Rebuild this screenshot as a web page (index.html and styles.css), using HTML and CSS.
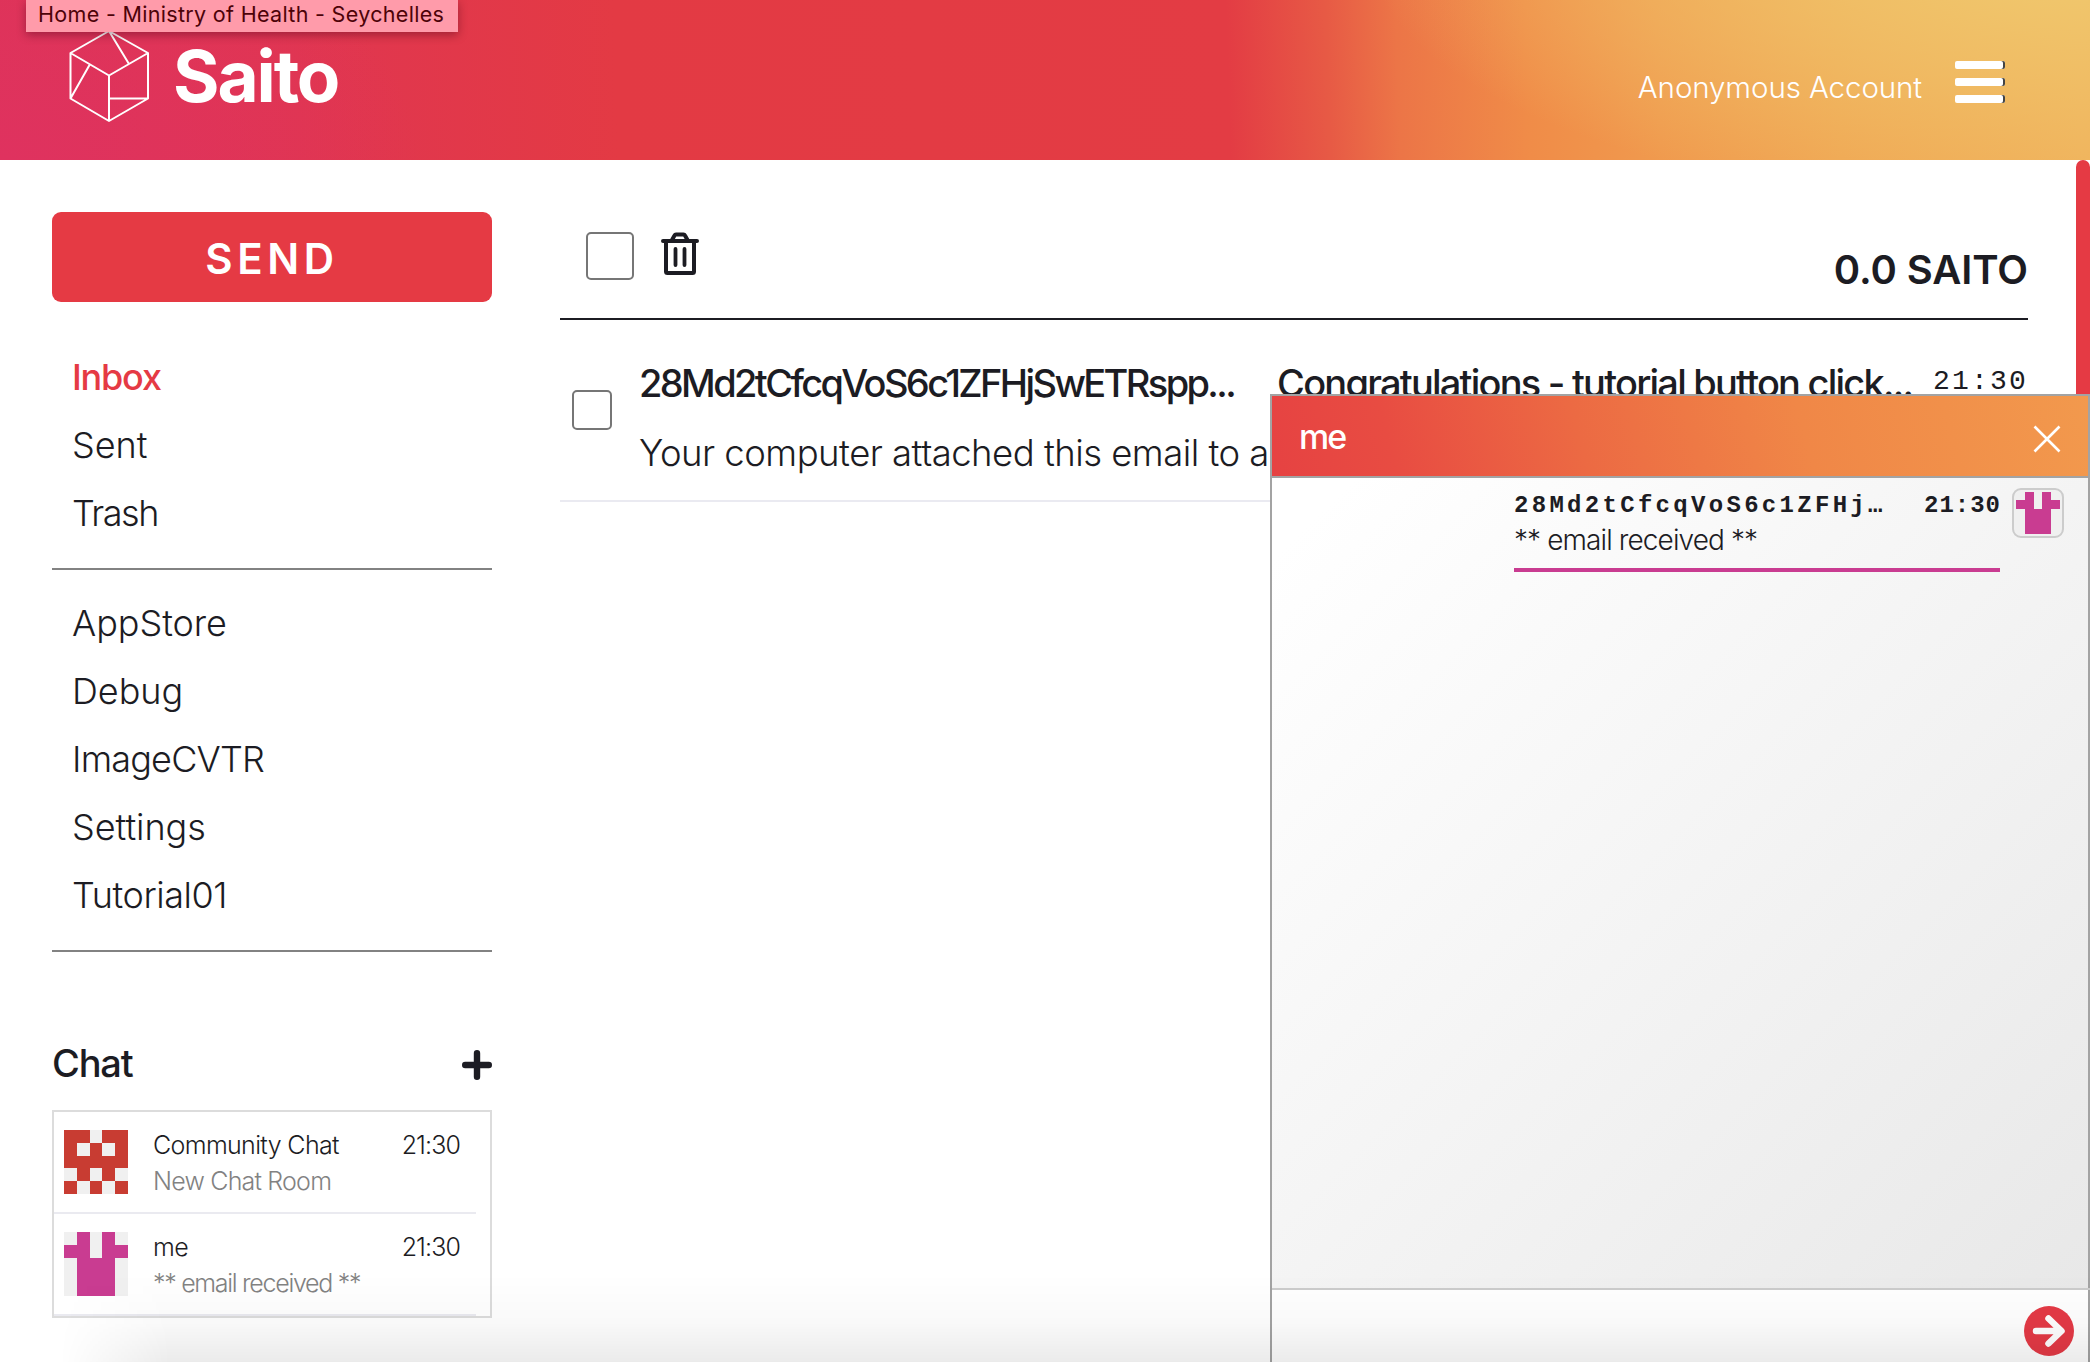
FILE: index.html
```html
<!DOCTYPE html>
<html lang="en">
<head>
<meta charset="utf-8">
<title>Saito Email</title>
<link rel="stylesheet" href="styles.css">
</head>
<body>
<header class="topbar">
  <div class="brand">
    <svg class="brand-mark" width="84" height="96" viewBox="0 0 84 96" fill="none" stroke="#fff" stroke-width="2" stroke-linejoin="round">
      <path d="M42 4 81 26V71.5L42 94 3.500 71.500V26ZM3.500 26 42 48.500 81 26M42 48.500V94M42 4 62 37M22.500 38 3.500 71.500M42 71.500H81"/>
    </svg>
    <span class="brand-name">Saito</span>
  </div>
  <div class="account">
    <span class="account-name">Anonymous Account</span>
    <span class="burger"><i></i><i></i><i></i></span>
  </div>
</header>
<div class="tooltip">Home - Ministry of Health - Seychelles</div>

<div class="page">
  <aside class="sidebar">
    <button class="send">SEND</button>
    <nav class="menu">
      <a class="active">Inbox</a>
      <a>Sent</a>
      <a class="tight">Trash</a>
    </nav>
    <nav class="menu apps">
      <a>AppStore</a>
      <a>Debug</a>
      <a class="caps">ImageCVTR</a>
      <a>Settings</a>
      <a class="digits">Tutorial01</a>
    </nav>
    <div class="chat-head">
      <h2>Chat</h2>
      <svg width="30" height="30" viewBox="0 0 30 30" stroke="#1c1c23" stroke-width="6.400" stroke-linecap="round"><path d="M15 3.200V26.800M3.200 15H26.800"/></svg>
    </div>
    <div class="rooms">
      <div class="room">
        <svg class="avatar" viewBox="0 0 5 5" shape-rendering="crispEdges"><path fill="#f0f0f0" d="M0 0H5V5H0Z"/><path fill="#c83c32" d="M0 0H2V1H3V0H5V3H4V4H5V5H4V4H3V5H2V4H1V5H0V4H1V3H0ZM1 1V2H2V1ZM3 1V2H4V1ZM2 3V4H3V3Z" fill-rule="evenodd"/></svg>
        <div class="room-text">Community Chat<small>New Chat Room</small></div>
        <time>21:30</time>
      </div>
      <div class="room">
        <svg class="avatar" viewBox="0 0 5 5" shape-rendering="crispEdges"><path fill="#f0f0f0" d="M0 0H5V5H0Z"/><path fill="#c93c91" d="M1 0H2V2H3V0H4V1H5V2H4V5H1V2H0V1H1Z"/></svg>
        <div class="room-text">me<small class="last-line">** email received **</small></div>
        <time>21:30</time>
      </div>
    </div>
  </aside>

  <main class="mail">
    <div class="toolbar">
      <span class="check big"></span>
      <svg class="trash" width="38" height="44" viewBox="0 0 38 44" fill="none" stroke="#1c1c23" stroke-width="4" stroke-linejoin="round" stroke-linecap="round"><path d="M5 10V39.500Q5 41 6.500 41H31.500Q33 41 33 39.500V10M2 9H36M11 8 13.500 3.500Q14 2.500 15 2.500H22.500Q23.500 2.500 24 3.500L26.500 8"/><path stroke-width="3.800" d="M14.500 17V33M23.500 17V33"/></svg>
      <span class="balance">0.0 SAITO</span>
    </div>
    <div class="message">
      <span class="check"></span>
      <div class="message-main">
        <div class="message-top">
          <b class="from">28Md2tCfcqVoS6c1ZFHjSwETRspp...</b>
          <b class="subject">Congratulations - tutorial button click...</b>
          <time>21:30</time>
        </div>
        <p class="excerpt">Your computer attached this email to a</p>
      </div>
    </div>
  </main>
  <div class="scrollbar"></div>
</div>

<section class="chatbox">
  <div class="chatbox-head">
    <span>me</span>
    <svg width="28" height="28" viewBox="0 0 28 28" stroke="#fff" stroke-width="2.600"><path d="M1.500 1.500 26.500 26.500M26.500 1.500 1.500 26.500"/></svg>
  </div>
  <div class="chatbox-body">
    <div class="bubble">
      <div class="bubble-top"><b>28Md2tCfcqVoS6c1ZFHj…</b><b class="when">21:30</b></div>
      <p>** email received **</p>
    </div>
    <div class="bubble-avatar">
      <svg viewBox="0 0 5 5" preserveAspectRatio="none" shape-rendering="crispEdges"><path fill="#f0f0f0" d="M0 0H5V5H0Z"/><path fill="#c93c91" d="M1 0H2V2H3V0H4V1H5V2H4V5H1V2H0V1H1Z"/></svg>
    </div>
  </div>
  <div class="chatbox-input">
    <svg width="50" height="50" viewBox="0 0 50 50"><circle cx="25" cy="25" r="25" fill="#e53a46"/><path d="M12 25H37M24.500 12.500 37.500 25 24.500 37.500" fill="none" stroke="#fff" stroke-width="6.500" stroke-linecap="round" stroke-linejoin="round"/></svg>
  </div>
</section>
<div class="bottom-shade"></div>
</body>
</html>
```
FILE: styles.css
```css
* { box-sizing: border-box; }
body {
  margin: 0;
  height: 1362px;
  overflow: hidden;
  background: #fff;
  color: #1c1c23;
  font-family: Inter, "Liberation Sans", sans-serif;
  font-weight: 300;
}
p, h2 { margin: 0; }

.topbar {
  height: 160px;
  padding: 0 85px 0 67px;
  display: flex;
  justify-content: space-between;
  background:
    radial-gradient(ellipse 420px 260px at 0 100%, #df325f, rgba(223, 50, 95, 0)),
    radial-gradient(ellipse 720px 260px at 100% -30%, #f0c66c 15%, rgba(240, 198, 108, 0)),
    linear-gradient(88deg, #de3457 0, #e03650 300px, #e33a44 620px, #e33c44 1230px, #e75a45 1330px, #ec7547 1400px, #f08c48 1530px, #f09a4e 1660px, #f0a653 1840px, #f0b05a 2080px);
}
.brand { display: flex; align-items: flex-start; padding-top: 27px; }
.brand-name { margin: 0 0 0 22px; font-size: 71px; line-height: 99px; font-weight: 700; color: #fff; letter-spacing: -2.100px; }
.account { display: flex; color: #fff; padding-top: 61px; }
.account-name { font-size: 29.500px; line-height: 52px; letter-spacing: -.1px; }
.burger { margin: 0 0 0 33px; width: 50px; display: flex; flex-direction: column; gap: 9px; }
.burger i { height: 8px; border-radius: 2px; background: #fff; box-shadow: inset -2px 0 #444; }

.tooltip {
  position: absolute; left: 26px; top: 0;
  width: 432px; height: 32px; padding-left: 12px;
  background: #ff9baa; color: #4d0208;
  font-size: 21.500px; line-height: 29px; font-weight: 400;
  letter-spacing: .32px;
  white-space: nowrap;
  box-shadow: 0 3px 10px rgba(60, 0, 20, .4);
}

.page { display: flex; height: 1202px; }
.sidebar { width: 492px; padding: 52px 0 0 52px; }
.send {
  display: block; width: 440px; height: 90px; padding: 0;
  border: 0; border-radius: 9px; background: #e53a44; color: #fff;
  font: 600 42px/93px Inter, sans-serif; letter-spacing: 4.600px;
}
.menu { padding: 41px 0 21px 20px; border-bottom: 2px solid #828282; }
.menu a { display: block; height: 68px; font-size: 36px; line-height: 68px; letter-spacing: -.05px; }
.menu a.active { color: #e53a44; font-weight: 500; letter-spacing: -1.200px; }
.menu a.tight { letter-spacing: -1.500px; }
.menu a.caps { letter-spacing: -.8px; }
.menu a.digits { letter-spacing: -.45px; }
.menu.apps { padding: 19px 0 21px 20px; }
.chat-head { display: flex; justify-content: space-between; align-items: center; height: 93px; margin-top: 65px; }
.chat-head h2 { font-size: 38px; font-weight: 500; line-height: 93px; letter-spacing: -1.200px; }
.chat-head svg { margin-top: 3px; }
.rooms { width: 440px; height: 208px; border: 2px solid #dcdcdc; }
.room { display: flex; width: 422px; height: 102px; padding: 18px 16px 0 10px; border-bottom: 2px solid #eaeaf0; font-size: 25px; letter-spacing: -.65px; }
.avatar { width: 64px; height: 64px; }
.room-text { flex: 1; margin-top: -3px; padding-left: 25px; line-height: 36px; }
.room-text small { display: block; font-size: 25px; color: #828282; letter-spacing: -.8px; }
.room-text .last-line { letter-spacing: -1.300px; }
.room time { margin-top: -3px; line-height: 36px; letter-spacing: -.9px; }

.mail { width: 1468px; margin-left: 68px; }
.toolbar { display: flex; height: 160px; padding-top: 72px; border-bottom: 2px solid #1c1c23; }
.check { flex: none; width: 40px; height: 40px; border: 2px solid #767676; border-radius: 5px; }
.check.big { width: 48px; height: 48px; margin-left: 26px; }
.trash { margin-left: 27px; }
.balance { margin-left: auto; font-size: 40px; font-weight: 600; line-height: 76px; letter-spacing: -.1px; }
.message { display: flex; height: 182px; padding: 70px 0 0 12px; border-bottom: 2px solid #eaeaf1; }
.message-main { flex: 1; margin: -42px 0 0 27px; white-space: nowrap; }
.message-top { display: flex; height: 70px; line-height: 70px; font-size: 38px; }
.message-top b { font-weight: 500; }
.message-top .from { letter-spacing: -2.620px; }
.message-top .subject { margin-left: 43px; letter-spacing: -1.780px; }
.message-top time { margin-left: auto; font: 28px/67px "Liberation Mono", monospace; letter-spacing: 2.200px; }
.excerpt { font-size: 36.500px; line-height: 70px; letter-spacing: -.53px; }
.scrollbar { width: 14px; margin-left: auto; border-radius: 7px 7px 0 0; background: #e53a44; }

.chatbox {
  position: absolute; left: 1270px; top: 394px;
  width: 820px; height: 968px;
  display: flex; flex-direction: column;
  border: 2px solid #a3a3a3; border-bottom: 0; background: #fff;
}
.chatbox-head {
  display: flex; justify-content: space-between; align-items: center;
  height: 82px; padding: 0 27px 0 27px;
  border-bottom: 2px solid #a3a3a3;
  background: linear-gradient(75deg, #e64242, #e84c42 15%, #ec6a43 38%, #f08747 65%, #f2994d);
  color: #fff; font-size: 34px; font-weight: 500; letter-spacing: -2px;
}
.chatbox-head svg { margin-top: 5px; }
.chatbox-body {
  display: flex; justify-content: flex-end; align-items: flex-start;
  height: 810px; padding: 10px 24px 0 0;
  background: linear-gradient(135deg, #fff 5%, #e8e8e8);
}
.bubble { width: 486px; height: 84px; border-bottom: 4px solid #c93c91; }
.bubble-top { display: flex; justify-content: space-between; height: 32px; font: 24px/35px "Liberation Mono", monospace; letter-spacing: 3.300px; }
.bubble-top b { font-weight: 700; }
.bubble-top .when { letter-spacing: 1px; margin-right: -1px; }
.bubble p { font-size: 28px; line-height: 40px; letter-spacing: -.9px; }
.bubble-avatar { width: 52px; height: 50px; margin-left: 12px; padding: 2px; border: 2px solid #ccc; border-radius: 9px; background: #f0f0f0; }
.bubble-avatar svg { display: block; width: 44px; height: 42px; }
.chatbox-input { display: flex; justify-content: flex-end; height: 74px; padding: 16px 16px 0 0; margin-right: -2px; border-top: 2px solid #ccc; }

.bottom-shade {
  position: absolute; left: 0; right: 0; bottom: 0; height: 88px;
  background: linear-gradient(rgba(0, 0, 0, 0), rgba(0, 0, 0, .025) 55%, rgba(0, 0, 0, .08));
  -webkit-mask-image: linear-gradient(90deg, transparent 60px, #000 170px);
  mask-image: linear-gradient(90deg, transparent 60px, #000 170px);
}
```
